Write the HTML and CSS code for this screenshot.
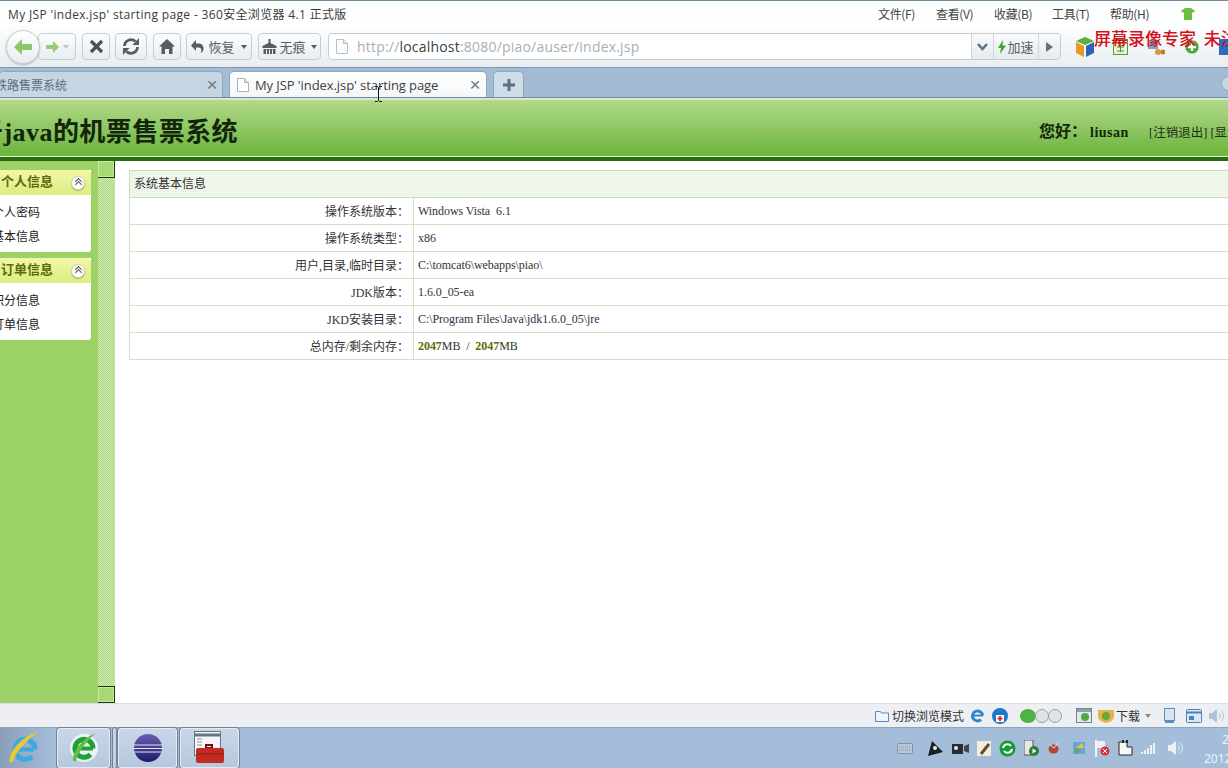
FILE: index.html
```html
<!DOCTYPE html>
<html lang="zh">
<head>
<meta charset="utf-8">
<title>My JSP 'index.jsp' starting page</title>
<link rel="stylesheet" href="styles.css">
</head>
<body>
<div class="browser">
  <header class="chrome">
    <div class="titlebar">
      <span class="wintitle">My JSP 'index.jsp' starting page - 360安全浏览器 4.1 正式版</span>
      <nav class="menu">
        <span>文件(F)</span><span>查看(V)</span><span>收藏(B)</span><span>工具(T)</span><span>帮助(H)</span>
        <svg class="shirt" width="14" height="12" viewBox="0 0 14 12"><path d="M4 0h6l4 3-2 2-1-1v8H3V4L2 5 0 3z" fill="#6cbf3c"/></svg>
      </nav>
    </div>
    <div class="toolbar">
      <div class="nav-pair">
        <button class="round"><svg width="20" height="18" viewBox="0 0 20 18"><path d="M9 1 1 9l8 8v-5h10V6H9z" fill="#8cc86a"/></svg></button>
        <button class="btn fwd"><svg width="13" height="12" viewBox="0 0 13 12"><path d="M7 0l6 6-6 6V8H0V4h7z" fill="#96cc74"/></svg><i class="caret pale"></i></button>
      </div>
      <button class="btn stop"><svg width="15" height="15" viewBox="0 0 15 15"><path d="M2 2l11 11M13 2 2 13" stroke="#4a5158" stroke-width="3.2" fill="none"/></svg></button>
      <button class="btn refresh"><svg width="18" height="17" viewBox="0 0 18 17"><path d="M2.500 8a6.500 6.500 0 0 1 11-4.500M15.500 9a6.500 6.500 0 0 1-11 4.500" stroke="#555c64" stroke-width="2.800" fill="none"/><path d="M17 0v7h-6.500zM1 17v-7h6.500z" fill="#555c64"/></svg></button>
      <button class="btn home"><svg width="16" height="15" viewBox="0 0 16 15"><path d="M8 0l8 7.500h-2.500V15H10v-5H6v5H2.500V7.500H0z" fill="#555c64"/></svg></button>
      <button class="btn restore"><svg width="14" height="14" viewBox="0 0 14 14"><path d="M5 0v3.500h3.500a5 5 0 0 1 1 9.500c1.500-2 1.200-5.500-2-5.500H5V11L0 5.500z" fill="#555c64"/></svg><span>恢复</span><i class="caret"></i></button>
      <button class="btn incog"><svg width="15" height="15" viewBox="0 0 15 15"><path d="M6.500 0h2v4l6 3v2H.5V7l6-3zM1.500 10h12v5h-12z" fill="#555c64"/><path d="M4.500 10.500V15M7.500 10.500V15M10.500 10.500V15" stroke="#eef1f3"/></svg><span>无痕</span><i class="caret"></i></button>
      <div class="urlgroup">
        <div class="urlfield">
          <svg width="12" height="15" viewBox="0 0 12 15"><path d="M.5.500h7l4 4v10H.5z" fill="#fbfbfb" stroke="#b5bcc2"/><path d="M7.500.500v4h4" fill="#e6e9ec" stroke="#b5bcc2"/></svg>
          <span class="url">http://<b>localhost</b>:8080/piao/auser/index.jsp</span>
        </div>
        <div class="urlcell drop"><svg width="11" height="8" viewBox="0 0 11 8"><path d="M1 1l4.500 5L10 1" stroke="#5e7387" stroke-width="2.600" fill="none"/></svg></div>
        <div class="urlcell boost"><svg width="8" height="14" viewBox="0 0 8 14"><path d="M5 0 0 8h3l-1 6 6-8.500H4.500z" fill="#3ea52d"/></svg><span>加速</span></div>
        <div class="urlcell play"><svg width="7" height="10" viewBox="0 0 7 10"><path d="M0 0l7 5-7 5z" fill="#5f7183"/></svg></div>
      </div>
      <div class="exts">
        <svg width="18" height="20" viewBox="0 0 18 20"><path d="M9 0l9 4-9 4-9-4z" fill="#5dae3a"/><path d="M0 5l8 4v11l-8-4z" fill="#e59a24"/><path d="M18 5l-8 4v11l8-4z" fill="#2a63b8"/></svg>
        <svg width="15" height="16" viewBox="0 0 15 16"><rect x=".5" y=".5" width="14" height="15" fill="#e8f3d8" stroke="#5e9a3a"/><path d="M4 4h7M4 8h7M4 12h7M7.500 3v10" stroke="#4c8f33"/></svg>
        <svg width="18" height="16" viewBox="0 0 18 16"><rect x="1" y="1" width="10" height="9" fill="#7ea4cf"/><circle cx="11" cy="13" r="3" fill="#d99a3a"/><circle cx="16" cy="13" r="2.500" fill="#c9772a"/></svg>
        <svg width="16" height="16" viewBox="0 0 16 16"><circle cx="8" cy="8" r="7" fill="#48a43a" stroke="#d8e8d0"/><path d="M8 4v8M4 8h8" stroke="#fff" stroke-width="2.400"/></svg>
        <svg width="12" height="16" viewBox="0 0 12 16"><rect width="12" height="16" fill="#2a6dc0"/></svg>
      </div>
    </div>
    <div class="tabstrip">
      <div class="tab inactive"><span class="tabtext">铁路售票系统</span><span class="close">×</span></div>
      <div class="tab active">
        <svg width="12" height="14" viewBox="0 0 12 14"><path d="M.5.500h7l4 4v9H.5z" fill="#fff" stroke="#aab2b9"/><path d="M7.500.500v4h4" fill="#e6e9ec" stroke="#aab2b9"/></svg>
        <span class="tabtext">My JSP 'index.jsp' starting page</span><span class="close">×</span>
      </div>
      <div class="tab plus"><svg width="14" height="14" viewBox="0 0 14 14"><path d="M7 1v12M1 7h12" stroke="#5e7080" stroke-width="3"/></svg></div>
      <span class="stripdot"></span>
    </div>
  </header>

  <main class="page">
    <div class="banner">
      <h1>于java的机票售票系统</h1>
      <div class="greet"><b class="hello">您好：</b><b class="user">liusan</b><span class="links">[注销退出] [显示桌面]</span></div>
    </div>
    <div class="workspace">
      <aside class="side">
        <section class="panel">
          <h2>个人信息<i class="fold"></i></h2>
          <ul><li>个人密码</li><li>基本信息</li></ul>
        </section>
        <section class="panel">
          <h2>订单信息<i class="fold"></i></h2>
          <ul><li>积分信息</li><li>订单信息</li></ul>
        </section>
      </aside>
      <div class="splitter"><span class="split-btn"></span><span class="split-btn low"></span></div>
      <div class="content">
        <table class="info">
          <colgroup><col class="col-label"><col></colgroup>
          <thead><tr><th colspan="2">系统基本信息</th></tr></thead>
          <tbody>
            <tr><th>操作系统版本：</th><td>Windows Vista&nbsp; 6.1</td></tr>
            <tr><th>操作系统类型：</th><td>x86</td></tr>
            <tr><th>用户,目录,临时目录：</th><td>C:\tomcat6\webapps\piao\</td></tr>
            <tr><th>JDK版本：</th><td>1.6.0_05-ea</td></tr>
            <tr><th>JKD安装目录：</th><td>C:\Program Files\Java\jdk1.6.0_05\jre</td></tr>
            <tr><th>总内存/剩余内存：</th><td><b>2047</b>MB &nbsp;/&nbsp; <b>2047</b>MB</td></tr>
          </tbody>
        </table>
      </div>
    </div>
  </main>

  <div class="status">
    <svg width="14" height="12" viewBox="0 0 14 12"><path d="M.5 1.500h5l1 1.500h7v8.500H.5z" fill="#eef6fc" stroke="#4d8fc0"/></svg>
    <span class="mode">切换浏览模式</span>
    <svg class="st-ie" width="15" height="15" viewBox="0 0 15 15"><path d="M12.500 7.500A5 5 0 1 0 11 11.500" fill="none" stroke="#2f86d0" stroke-width="3"/><path d="M3 7.500h10" stroke="#2f86d0" stroke-width="2"/></svg>
    <svg class="st-360" width="16" height="16" viewBox="0 0 16 16"><circle cx="8" cy="8" r="8" fill="#1d78c8"/><rect x="4" y="7" width="8" height="7" fill="#fff"/><path d="M8 8v5M5.500 10.500h5" stroke="#d8352a" stroke-width="2"/></svg>
    <span class="toggle"><i class="on"></i><i></i><i></i></span>
    <svg class="st-a" width="16" height="15" viewBox="0 0 16 15"><rect x=".5" y=".5" width="15" height="14" fill="#dfe8ea" stroke="#6a8a90"/><path d="M1 1h14v3H1z" fill="#8aa6ac"/><circle cx="9" cy="9" r="4" fill="#54a544"/></svg>
    <svg class="st-b" width="16" height="14" viewBox="0 0 16 14"><path d="M0 1h16v6c0 4-4 6-8 7-4-1-8-3-8-7z" fill="#e8b04a"/><circle cx="8" cy="7" r="4" fill="#62ab3b"/></svg>
    <span class="dl">下载</span><i class="caret st-caret"></i>
    <svg class="st-c" width="11" height="15" viewBox="0 0 11 15"><rect x=".5" y=".5" width="10" height="12" fill="#d6e6f5" stroke="#5a8dc0"/><path d="M1 14h9" stroke="#5a8dc0" stroke-width="2"/></svg>
    <svg class="st-d" width="16" height="14" viewBox="0 0 16 14"><rect x=".5" y=".5" width="15" height="13" rx="1" fill="#dbe8f4" stroke="#4d82b8"/><path d="M1 3.500h14" stroke="#4d82b8" stroke-width="2"/><rect x="3" y="7" width="5" height="4" fill="#4d82b8"/></svg>
    <svg class="st-e" width="15" height="14" viewBox="0 0 15 14"><path d="M0 4h3l5-4v14l-5-4H0z" fill="#a8c3de"/><path d="M10 4c1.500 2 1.500 4 0 6M12.500 2c2.500 3 2.500 7 0 10" stroke="#a8c3de" fill="none"/></svg>
  </div>

  <footer class="taskbar">
    <div class="orb">
      <svg width="36" height="36" viewBox="0 0 36 36"><path d="M29 19.500A10 10 0 1 0 26 26.500" fill="none" stroke="#3da9e0" stroke-width="5"/><path d="M10 19.500h18" stroke="#3da9e0" stroke-width="4"/><path d="M4 32C2 22 16 6 32 2 24 8 10 20 7 32z" fill="#e8c93a"/></svg>
    </div>
    <div class="task t1"><svg width="32" height="34" viewBox="0 0 32 34"><circle cx="16" cy="17" r="14" fill="#fff" opacity=".7"/><path d="M25 17.500A9 9 0 1 0 22.500 23.500" fill="none" stroke="#1ea034" stroke-width="5"/><path d="M7 17.500h18" stroke="#1ea034" stroke-width="4"/><path d="M5 30C4 20 16 6 28 2 21 8 10 20 8 30z" fill="#62c050"/></svg></div>
    <span class="grip"></span>
    <div class="task t2"><svg width="30" height="30" viewBox="0 0 30 30"><defs><linearGradient id="ec" x1="0" y1="0" x2="0" y2="1"><stop offset="0" stop-color="#6d5fb0"/><stop offset="1" stop-color="#1c1a6c"/></linearGradient></defs><circle cx="15" cy="15" r="14" fill="url(#ec)"/><path d="M1 12h28M0.500 15.500h29M1.500 19h27" stroke="#e8e8f4" stroke-width="1.200"/></svg></div>
    <div class="task t3"><svg width="32" height="34" viewBox="0 0 32 34"><rect x=".5" y=".5" width="26" height="24" fill="#f4f6f8" stroke="#6a7480"/><path d="M1 4h25" stroke="#6a7480" stroke-width="3"/><path d="M3 8h5M3 11h5M3 14h5" stroke="#8a96a2"/><path d="M12 14h6v3h-6z" fill="none" stroke="#7a1010" stroke-width="2"/><rect x="2" y="17" width="28" height="15" rx="2" fill="#c22a22"/><path d="M2 23h28" stroke="#8a1a14"/></svg></div>
    <div class="tray">
      <svg class="kb" width="16" height="11" viewBox="0 0 16 11"><rect x=".5" y=".5" width="15" height="10" rx="1" fill="#b9c8d8" stroke="#7f91a4"/><path d="M2 4h12M2 7h12" stroke="#7f91a4" stroke-dasharray="1 1"/></svg>
      <svg width="17" height="17" viewBox="0 0 17 17"><path d="M1 16 5 1l11 11z" fill="#1b1e22"/><circle cx="8" cy="8" r="2" fill="#e4e8ec"/></svg>
      <svg width="17" height="13" viewBox="0 0 17 13"><rect y="2" width="11" height="10" fill="#2a2d30"/><circle cx="4" cy="6" r="2" fill="#e4e8ec"/><path d="M12 4l5-2v9l-5-2z" fill="#444"/></svg>
      <svg width="14" height="15" viewBox="0 0 14 15"><rect width="14" height="15" fill="#f2eee0"/><path d="M4 13 12 3" stroke="#6b4a20" stroke-width="3"/></svg>
      <svg width="17" height="17" viewBox="0 0 17 17"><circle cx="8.500" cy="8.500" r="8" fill="#159a36"/><path d="M4 8a4.500 4.500 0 0 1 8-2M13 9a4.500 4.500 0 0 1-8 2" stroke="#fff" stroke-width="2" fill="none"/></svg>
      <svg width="15" height="16" viewBox="0 0 15 16"><rect width="9" height="15" fill="#e8e8e8" stroke="#555"/><circle cx="10" cy="11" r="5" fill="#2f7d3a"/><path d="M8.500 8.500v5l4-2.500z" fill="#fff"/></svg>
      <svg width="13" height="12" viewBox="0 0 13 12"><ellipse cx="6.500" cy="7" rx="5" ry="4.500" fill="#b8433a"/><path d="M3 3l4 3 4-5" stroke="#e2e6ea" fill="none"/></svg>
      <svg class="tray-far" width="15" height="16" viewBox="0 0 15 16"><rect x="1" y="2" width="12" height="12" fill="#6aa4d8"/><path d="M4 8h8l-2-5z" fill="#e8c83a"/><circle cx="5" cy="11" r="2.500" fill="#5fae4a"/></svg>
      <svg width="15" height="17" viewBox="0 0 15 17"><path d="M1 0v17" stroke="#f2f4f6" stroke-width="2"/><path d="M2 1h8v7H2z" fill="#eef0f2"/><circle cx="10" cy="11" r="4.500" fill="#d8343a"/><path d="M8 9l4 4m0-4-4 4" stroke="#fff"/></svg>
      <svg width="15" height="16" viewBox="0 0 15 16"><path d="M1 2h8v5h5v8H1z" fill="#f6f7f8" stroke="#25282b"/><path d="M5 0v3M9 0v3" stroke="#25282b" stroke-width="2"/></svg>
      <svg width="16" height="13" viewBox="0 0 16 13"><path d="M1 12v-2M4 12V8M7 12V6M10 12V3M13 12V1" stroke="#eef1f4" stroke-width="2"/></svg>
      <svg class="tray-vol" width="15" height="14" viewBox="0 0 15 14"><path d="M0 4h3l5-4v14l-5-4H0z" fill="#eef1f4"/><path d="M10 4c1.500 2 1.500 4 0 6M12.500 2c2.500 3 2.500 7 0 10" stroke="#eef1f4" fill="none"/></svg>
      <div class="clock"><span>21:30</span><span>2012/3/21</span></div>
    </div>
  </footer>

  <div class="watermark">屏幕录像专家&nbsp;&nbsp;未注册</div>
  <svg class="cursor" width="7" height="16" viewBox="0 0 7 16"><path d="M0 .500h2.500l1 1 1-1H7M3.500 1.500v13M0 15.500h2.500l1-1 1 1H7" stroke="#111" fill="none"/></svg>
</div>
</body>
</html>
```
FILE: styles.css
```css
* { box-sizing: border-box; }
html, body { margin: 0; padding: 0; height: 100%; overflow: hidden; background: #fff; }
ul { margin: 0; padding: 0; list-style: none; }
h1, h2 { margin: 0; }
button { margin: 0; padding: 0; font: inherit; }

.browser {
  position: relative;
  width: 1228px;
  height: 768px;
  overflow: hidden;
  display: flex;
  flex-direction: column;
  font-family: "Noto Sans CJK SC", "Noto Sans", sans-serif;
}

/* window chrome */
.chrome { flex: none; height: 100px; display: flex; flex-direction: column; background: linear-gradient(#fdfefe 0, #fdfefe 25px, #e8edf1 67px, #dbe6d0 67px); border-top: 1px solid #6f8c99; }
.titlebar { flex: none; height: 27px; display: flex; align-items: center; justify-content: space-between; padding: 0 0 2px 8px; color: #333; font-size: 12px; }
.wintitle { font-family: "Open Sans", "Noto Sans CJK SC", sans-serif; font-size: 12px; color: #3b3b3b; letter-spacing: .34px; }
.menu { display: flex; align-items: center; padding-right: 33px; color: #444; }
.menu span { margin-right: 18px; letter-spacing: -.35px; width: 40px; white-space: nowrap; }
.shirt { margin-left: 13px; }

.toolbar { flex: none; height: 40px; padding: 5px 0 0 6px; display: flex; align-items: flex-start; border-bottom: 1px solid #7d9ab0; }
.btn {
  height: 27px;
  display: flex;
  align-items: center;
  justify-content: center;
  border: 1px solid #c6cdd4;
  border-radius: 4px;
  background: linear-gradient(#fbfcfd, #e9edf0);
  color: #5a5f66;
  font-size: 13px;
}
.nav-pair { display: flex; align-items: center; width: 71px; height: 27px; margin-right: 5px; flex: none; }
.round {
  position: relative;
  z-index: 1;
  flex: none;
  width: 34px;
  height: 34px;
  border: 1px solid #c2cad1;
  border-radius: 50%;
  background: linear-gradient(#ffffff, #e9edf0);
  box-shadow: 0 1px 2px rgba(70, 90, 110, .4);
  display: flex;
  align-items: center;
  justify-content: center;
}
.fwd { width: 38px; margin-left: -2px; gap: 4px; }
.stop { width: 28px; margin-right: 5px; flex: none; }
.refresh { width: 32px; margin-right: 6px; flex: none; }
.home { width: 28px; margin-right: 5px; flex: none; }
.restore { width: 66px; gap: 3px; margin-right: 6px; flex: none; }
.incog { width: 63px; gap: 2px; margin-right: 7px; flex: none; }
.caret { display: inline-block; width: 0; height: 0; margin-left: 3px; border: 3px solid transparent; border-top: 4px solid #555c64; border-bottom: 0; }
.caret.pale { border-top-color: #bcc3c9; margin-left: 0; }

.urlgroup { width: 733px; height: 27px; flex: none; display: flex; align-items: stretch; border: 1px solid #c3ccd4; border-radius: 4px; background: #fff; }
.urlfield { flex: 1; display: flex; align-items: center; gap: 9px; padding-left: 7px; min-width: 0; }
.url { font-family: "Open Sans", sans-serif; font-size: 14px; color: #a9aeb3; white-space: nowrap; letter-spacing: .2px; }
.url b { font-weight: 400; color: #3a3f44; }
.urlcell { flex: none; display: flex; align-items: center; justify-content: center; border-left: 1px solid #cdd4da; background: linear-gradient(#f9fafb, #e6ebef); font-size: 13px; color: #5a6067; }
.drop { width: 22px; }
.boost { width: 45px; gap: 1px; }
.play { width: 22px; border-radius: 0 3px 3px 0; }
.exts { display: flex; align-items: center; gap: 19px; height: 27px; margin-left: 15px; padding-top: 1px; flex: none; }

.tabstrip { flex: none; height: 30px; position: relative; display: flex; align-items: flex-end; gap: 6px; padding-top: 3px; background: #a3bcd3; border-bottom: 1px solid #6d8ea8; }
.tab { height: 26px; display: flex; align-items: center; border-radius: 5px 5px 0 0; font-family: "Open Sans", "Noto Sans CJK SC", sans-serif; font-size: 12px; color: #444; border: 1px solid #8ba8bf; border-bottom: 0; flex: none; }
.inactive { width: 224px; margin-left: -1px; justify-content: space-between; background: #c4d5e3; color: #626c75; border-left: 0; }
.inactive .tabtext { margin-left: -4px; }
.inactive .close { margin-right: -1px; }
.active { width: 258px; background: linear-gradient(#fff, #f3f6f8); padding-left: 7px; gap: 6px; }
.active .tabtext { flex: 1; font-size: 13px; color: #3f3f3f; letter-spacing: -.08px; }
.close { font-family: "Liberation Sans", sans-serif; font-size: 19px; line-height: 1; color: #6e7880; width: 22px; text-align: center; }
.plus { width: 31px; justify-content: center; background: #cfdde9; }
.stripdot { position: absolute; right: -8px; top: 8px; width: 15px; height: 15px; border-radius: 50%; background: #c9d6e0; border: 1px solid #8ea6b8; }

/* web page */
.page { flex: 1; min-height: 0; display: flex; flex-direction: column; font-family: "Liberation Serif", "Noto Sans CJK SC", serif; }
.banner { flex: none; height: 61px; padding-top: 2px; display: flex; align-items: center; justify-content: space-between; background: linear-gradient(#b3d98a, #6db63f 94%); border-bottom: 4px solid #286b0e; box-shadow: inset 0 -1px 0 #e8f4dc; white-space: nowrap; overflow: hidden; }
.banner h1 { font-family: "Liberation Serif", "Noto Sans CJK SC", serif; margin-left: -23px; font-size: 26px; font-weight: 700; letter-spacing: .45px; color: #12260c; flex: none; }
.greet { display: flex; align-items: baseline; width: 189px; flex: none; }
.hello { font-size: 16px; color: #12260c; width: 51px; flex: none; }
.user { font-size: 14px; letter-spacing: .5px; color: #12260c; width: 59px; flex: none; }
.links { font-size: 12.5px; color: #1e2e18; flex: none; }

.workspace { flex: 1; min-height: 0; display: flex; }
.side { flex: none; width: 98px; padding: 9px 7px 0 0; background: #9dd268; overflow: hidden; }
.panel { background: #fff; border-radius: 0 0 3px 0; margin-bottom: 6px; height: 82px; }
.panel h2 { height: 25px; display: flex; align-items: center; justify-content: space-between; padding: 0 6px 4px 1px; background: linear-gradient(#f2f7a8, #dcec80); border-radius: 0 5px 0 0; font-family: "Noto Sans CJK SC", sans-serif; font-size: 13px; font-weight: 700; color: #5c6a08; }
.fold { width: 14px; height: 14px; margin-top: 4px; border-radius: 50%; background: #fff; border: 1px solid #d0d6b0; position: relative; box-shadow: 0 1px 1px rgba(90, 100, 40, .4); }
.fold::before, .fold::after { content: ""; position: absolute; left: 4px; width: 4px; height: 4px; border-left: 1px solid #555; border-top: 1px solid #555; transform: rotate(45deg); }
.fold::before { top: 2px; }
.fold::after { top: 5px; }
.panel ul { padding-top: 5px; }
.panel li { height: 24px; line-height: 24px; margin-left: -8px; font-family: "Noto Sans CJK SC", sans-serif; font-size: 12px; color: #222; white-space: nowrap; }

.splitter { flex: none; width: 17px; display: flex; flex-direction: column; justify-content: space-between; background: repeating-conic-gradient(#aed984 0 25%, #cfe8ae 0 50%) 0 0 / 2px 2px; }
.split-btn { display: block; height: 17px; background: #a6d873; border: 1px solid #1c3a10; border-width: 0 1px 1px 0; box-shadow: inset 0 0 0 1px #c8e8a4; }
.split-btn.low { border-width: 1px 1px 1px 0; }

.content { flex: 1; min-width: 0; padding: 9px 0 0 14px; background: #fff; overflow: hidden; }
.info { width: 1200px; border-collapse: collapse; table-layout: fixed; font-size: 12px; color: #333; }
.col-label { width: 284px; }
.info thead th { height: 27px; padding: 0 0 4px 4px; text-align: left; font-family: "Noto Sans CJK SC", sans-serif; font-weight: 400; background: #eef5ea; border: 1px solid #cfdcb8; color: #333; }
.info tbody th { height: 27px; padding-right: 4px; text-align: right; font-family: "Liberation Serif", "Noto Sans CJK SC", serif; font-weight: 400; border: 1px solid #d5e0c4; color: #333; }
.info td { height: 27px; padding-left: 4px; border: 1px solid #d5e0c4; letter-spacing: -.06px; }
.info td b { color: #5c6a08; }

/* status bar */
.status { flex: none; height: 24px; display: flex; align-items: center; padding-left: 875px; background: #eeeff3; border-top: 1px solid #d9dee3; white-space: nowrap; font-size: 12px; color: #333; }
.status svg { flex: none; }
.mode { margin: 0 6px 0 3px; }
.st-360 { margin-left: 7px; }
.toggle { display: flex; margin: 0 14px 0 13px; flex: none; }
.toggle i { width: 14px; height: 14px; margin-left: -1px; border-radius: 50%; background: #dfe3e6; border: 1px solid #9aa2a8; }
.toggle .on { background: #4fb244; border-color: #4fb244; width: 16px; }
.st-b { margin-left: 6px; }
.dl { margin-left: 2px; }
.st-caret { margin-left: 5px; border-top-color: #888; }
.st-c { margin-left: 13px; }
.st-d { margin-left: 11px; }
.st-e { margin-left: 7px; }

/* taskbar */
.taskbar { flex: none; height: 41px; display: flex; align-items: flex-end; background: #a4bdd8; border-top: 1px solid #8da6bd; position: relative; }
.orb { width: 55px; height: 40px; display: flex; align-items: center; justify-content: center; padding-right: 8px; background: linear-gradient(90deg, #8aa0ba, #a4bdd8); flex: none; }
.task { height: 40px; flex: none; display: flex; align-items: center; justify-content: center; background: linear-gradient(#c9d8e8, #b4c8de); border: 1px solid #e3ebf3; border-radius: 3px; box-shadow: 0 0 0 1px #6f8499; }
.t1 { width: 53px; margin-left: 2px; }
.grip { width: 3px; height: 40px; margin: 0 2px 0 3px; background: #c3d3e4; box-shadow: 0 0 0 1px #6f8499; border-radius: 2px; flex: none; }
.t2 { width: 59px; }
.t3 { width: 59px; margin-left: 3px; }
.tray { margin-left: auto; height: 40px; display: flex; align-items: center; gap: 8px; padding-left: 8px; width: 339px; flex: none; position: relative; }
.tray svg { flex: none; }
.tray .kb { margin-right: 6px; }
.tray .tray-far { margin-left: 4px; }
.tray .tray-vol { margin-left: 3px; }
.clock { display: flex; flex-direction: column; align-items: flex-start; gap: 3px; margin-left: 13px; padding-top: 3px; font-family: "Noto Sans", sans-serif; font-size: 12px; line-height: 16px; color: #eef3f8; white-space: nowrap; flex: none; }
.clock span:first-child { margin-left: 18px; }

.watermark { position: absolute; left: 1094px; top: 25px; font-family: "Noto Sans CJK SC", sans-serif; font-size: 17px; font-weight: 500; color: #d4101c; white-space: nowrap; }
.cursor { position: absolute; left: 375px; top: 86px; }
```
